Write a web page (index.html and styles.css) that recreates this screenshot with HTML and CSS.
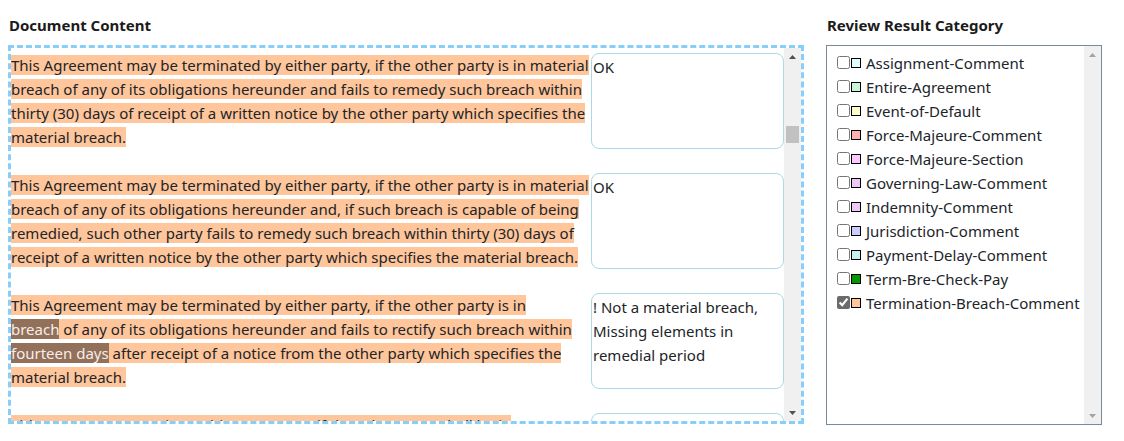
FILE: index.html
```html
<!DOCTYPE html>
<html lang="en">
<head>
<meta charset="utf-8">
<title>Review</title>
<link rel="stylesheet" href="styles.css">
</head>
<body>
<div class="page">
  <section class="left">
    <h2 class="title">Document Content</h2>
    <div class="docbox">
      <div class="doc-content">
        <div class="row">
          <p class="para"><span class="hl">This Agreement may be terminated by either party, if the other party is in material breach of any of its obligations hereunder and fails to remedy such breach within thirty (30) days of receipt of a written notice by the other party which specifies the material breach.</span></p>
          <textarea class="comment">OK</textarea>
        </div>
        <div class="row">
          <p class="para"><span class="hl">This Agreement may be terminated by either party, if the other party is in material breach of any of its obligations hereunder and, if such breach is capable of being remedied, such other party fails to remedy such breach within thirty (30) days of receipt of a written notice by the other party which specifies the material breach.</span></p>
          <textarea class="comment">OK</textarea>
        </div>
        <div class="row">
          <p class="para"><span class="hl">This Agreement may be terminated by either party, if the other party is in<br><span class="hl-dark">breach</span> of any of its obligations hereunder and fails to rectify such breach within <span class="hl-dark">fourteen days</span> after receipt of a notice from the other party which specifies the material breach.</span></p>
          <textarea class="comment">! Not a material breach, Missing elements in remedial period</textarea>
        </div>
        <div class="row">
          <p class="para"><span class="hl">Either party may terminate this Agreement if the other party shall be in<br>material breach of any of its obligations hereunder.</span></p>
          <textarea class="comment">! Not a material breach, Missing elements in remedial period</textarea>
        </div>
      </div>
      <div class="vscroll">
        <div class="sbtn"><svg width="7" height="4" viewBox="0 0 7 4"><path d="M0 4L3.5 0L7 4Z" fill="#505050"/></svg></div>
        <div class="strack"><div class="sthumb"></div></div>
        <div class="sbtn"><svg width="7" height="4" viewBox="0 0 7 4"><path d="M0 0L3.5 4L7 0Z" fill="#505050"/></svg></div>
      </div>
    </div>
  </section>
  <section class="right">
    <h2 class="title">Review Result Category</h2>
    <div class="listbox">
      <ul class="cat-list">
        <li class="item"><input type="checkbox"><span class="swatch c1"></span><span>Assignment-Comment</span></li>
        <li class="item"><input type="checkbox"><span class="swatch c2"></span><span>Entire-Agreement</span></li>
        <li class="item"><input type="checkbox"><span class="swatch c3"></span><span>Event-of-Default</span></li>
        <li class="item"><input type="checkbox"><span class="swatch c4"></span><span>Force-Majeure-Comment</span></li>
        <li class="item"><input type="checkbox"><span class="swatch c5"></span><span>Force-Majeure-Section</span></li>
        <li class="item"><input type="checkbox"><span class="swatch c6"></span><span>Governing-Law-Comment</span></li>
        <li class="item"><input type="checkbox"><span class="swatch c7"></span><span>Indemnity-Comment</span></li>
        <li class="item"><input type="checkbox"><span class="swatch c8"></span><span>Jurisdiction-Comment</span></li>
        <li class="item"><input type="checkbox"><span class="swatch c9"></span><span>Payment-Delay-Comment</span></li>
        <li class="item"><input type="checkbox"><span class="swatch c10"></span><span>Term-Bre-Check-Pay</span></li>
        <li class="item"><input type="checkbox" checked><span class="swatch c11"></span><span>Termination-Breach-Comment</span></li>
      </ul>
      <div class="vscroll light">
        <div class="sbtn"><svg width="7" height="4" viewBox="0 0 7 4"><path d="M0 4L3.5 0L7 4Z" fill="#a3a3a3"/></svg></div>
        <div class="strack"></div>
        <div class="sbtn"><svg width="7" height="4" viewBox="0 0 7 4"><path d="M0 0L3.5 4L7 0Z" fill="#a3a3a3"/></svg></div>
      </div>
    </div>
  </section>
</div>
</body>
</html>
```
FILE: styles.css
```css
* { box-sizing: border-box; }
html, body { margin: 0; padding: 0; background: #fff; }
body {
  font-family: "Noto Sans", "Open Sans", sans-serif;
  font-size: 15px;
  line-height: 24px;
  color: #212529;
}
.page {
  display: flex;
  gap: 22px;
  padding: 13px 0 0 8px;
}
.left { width: 796px; }
.right { width: 276px; }
.title {
  margin: 0 0 8px 1px;
  font-size: 15px;
  font-weight: bold;
  line-height: 24px;
  color: #1b1b1b;
}
.docbox {
  display: flex;
  height: 379px;
  border: 3px dashed #87cefa;
}
.doc-content {
  flex: 1;
  overflow: hidden;
  padding-top: 5px;
}
.row {
  display: flex;
  margin-bottom: 24px;
}
.para {
  width: 580px;
  margin: 0;
  line-height: 24px;
}
.hl { background: #ffc59b; }
.hl-dark { background: #93705a; color: #f6eee8; }
.comment {
  width: 193px;
  height: 96px;
  margin: 0;
  padding: 1px 1px;
  border: 1px solid #add8e6;
  border-radius: 8px;
  font-family: inherit;
  font-size: 15px;
  line-height: 24px;
  color: #212529;
  resize: none;
  overflow: hidden;
  outline: none;
  background: #fff;
}
.vscroll {
  width: 17px;
  flex: none;
  display: flex;
  flex-direction: column;
  background: #f0f0f0;
}
.sbtn {
  height: 17px;
  display: flex;
  align-items: center;
  justify-content: center;
}
.sbtn svg { display: block; }
.strack {
  flex: 1;
  padding-top: 61px;
}
.sthumb {
  height: 17px;
  margin: 0 2px;
  background: #c1c1c1;
}
.listbox {
  display: flex;
  height: 380px;
  border: 1px solid #7b8a98;
}
.cat-list {
  flex: 1;
  list-style: none;
  margin: 0;
  padding: 5px 0 0 10px;
}
.item {
  display: flex;
  align-items: center;
  height: 24px;
  white-space: nowrap;
}
.item input {
  width: 13px;
  height: 13px;
  margin: -1px 1px 0 0;
  accent-color: #6b6b6b;
}
.swatch {
  width: 10px;
  height: 10px;
  margin: -1px 5px 0 0;
  border: 1px solid #000;
}
.c1 { background: #e0ffff; }
.c2 { background: #c8f7d8; }
.c3 { background: #ffffcc; }
.c4 { background: #ffb0b0; }
.c5 { background: #ffc8ff; }
.c6 { background: #ecc8f8; }
.c7 { background: #f0c8f8; }
.c8 { background: #ccccff; }
.c9 { background: #c8f0ee; }
.c10 { background: #009900; }
.c11 { background: #ffc59b; }
```
